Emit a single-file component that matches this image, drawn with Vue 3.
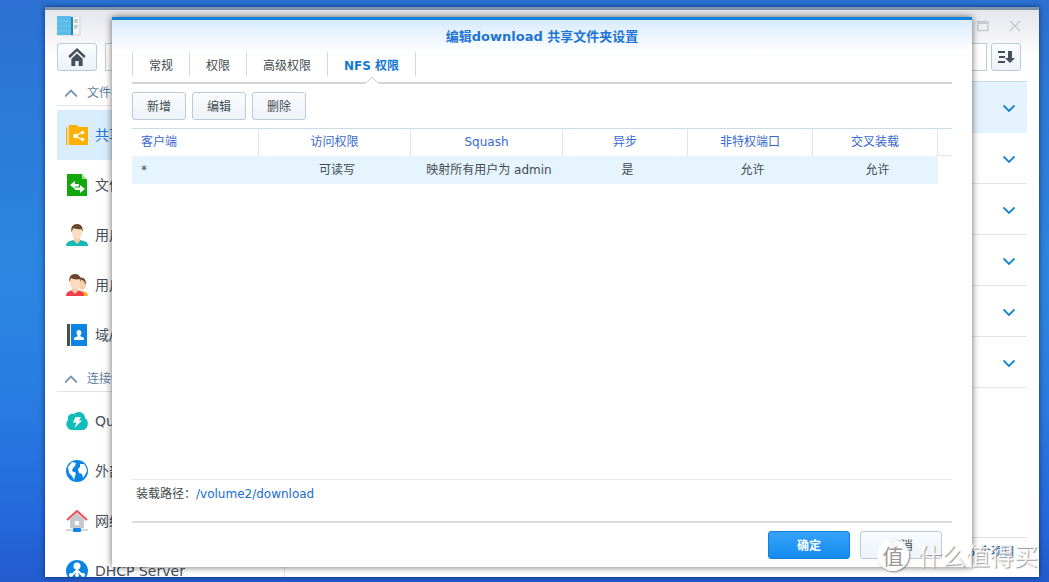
<script setup>
const shares = [
  { name: 'download', open: true },
  { name: 'homes' },
  { name: 'music' },
  { name: 'photo' },
  { name: 'video' },
  { name: 'web' },
]
const fileItems = [
  { icon: 'share', label: '共享文件夹', active: true },
  { icon: 'file', label: '文件服务' },
  { icon: 'user', label: '用户账号' },
  { icon: 'group', label: '用户群组' },
  { icon: 'domain', label: '域/LDAP' },
]
const linkItems = [
  { icon: 'cloud', label: 'QuickConnect' },
  { icon: 'globe', label: '外部访问' },
  { icon: 'network', label: '网络' },
  { icon: 'dhcp', label: 'DHCP Server' },
]
const groups = [
  { title: '文件共享', items: fileItems },
  { title: '连接性', items: linkItems },
]
const tabs = ['常规', '权限', '高级权限', 'NFS 权限']
const actions = ['新增', '编辑', '删除']
const heads = ['客户端', '访问权限', 'Squash', '异步', '非特权端口', '交叉装载']
const row = ['*', '可读写', '映射所有用户为 admin', '是', '允许', '允许']
</script>

<template>
  <div class="desktop">
    <section class="window">
      <header class="titlebar">
        <svg class="app-icon" viewBox="0 0 24 20">
          <rect width="24" height="20" fill="#dfe3e8" />
          <rect width="14" height="19" fill="#59bce8" />
          <path d="M0 5h14M0 10h14M0 15h14" stroke="#6cc6ee" />
          <rect x="14" y="1" width="2" height="18" fill="#2f7fae" />
          <rect x="16" y="1" width="6" height="17" fill="#f4f6f7" />
          <path d="M17 4h4M17 10h4" stroke="#5aa9d4" />
          <path d="M17 6h4M17 12h3" stroke="#b3b24d" />
        </svg>
        <div class="win-buttons">
          <button type="button" aria-label="最大化">
            <svg viewBox="0 0 12 12"><path d="M1 1.500h10v9H1z" fill="none" stroke="#c9cacd" stroke-width="1.500" /><path d="M1 3h10" stroke="#c9cacd" stroke-width="2" /></svg>
          </button>
          <button type="button" aria-label="关闭">
            <svg viewBox="0 0 12 12"><path d="M1 1l10 10M11 1L1 11" stroke="#c9cacd" stroke-width="1.500" /></svg>
          </button>
        </div>
      </header>

      <div class="toolbar">
        <button type="button" class="btn home" aria-label="主页">
          <svg viewBox="0 0 16 16">
            <path d="M1 8l7-6.500L15 8" fill="none" stroke="#464f5a" stroke-width="2.200" />
            <path d="M3 9.500l5-4.600 5 4.600V16H9.500v-4.500h-3V16H3z" fill="#464f5a" />
          </svg>
        </button>
        <input class="search" type="text" aria-label="搜索" />
        <input class="filter" type="text" aria-label="筛选" />
        <button type="button" class="btn sort" aria-label="排序">
          <svg viewBox="0 0 18 14">
            <path d="M1 2h7M2 7h6M1 12h7" stroke="#464f5a" stroke-width="2" />
            <path d="M11 1h4v7h3l-5 5-5-5h3z" fill="#464f5a" />
          </svg>
        </button>
      </div>

      <div class="body">
        <nav class="sidebar">
          <template v-for="g in groups" :key="g.title">
            <button type="button" class="group">
              <svg viewBox="0 0 12 8"><path d="M0 7.500l6-6 6 6" fill="none" stroke="#7591ac" stroke-width="1.800" /></svg>
              {{ g.title }}
            </button>
            <a v-for="it in g.items" :key="it.label" href="#" class="item" :class="{ active: it.active }">
              <svg viewBox="0 0 22 22">
                <g v-if="it.icon === 'share'">
                  <path d="M.7 3.500v17.500" fill="none" stroke="#ffb000" stroke-width="1.400" />
                  <path d="M2.800 1h8l2 2H22v18H2.800z" fill="#ffb000" />
                  <path d="M16.500 8.500L9 12l7.500 3.500" fill="none" stroke="#fff" stroke-width="1.300" />
                  <circle cx="9.500" cy="12" r="2.300" fill="#fff" /><circle cx="16.500" cy="8.500" r="1.700" fill="#fff" /><circle cx="16.500" cy="15.500" r="1.700" fill="#fff" />
                </g>
                <g v-else-if="it.icon === 'file'">
                  <path d="M1 0h14.500L21 5.500V22H1z" fill="#13a80b" /><path d="M16 .5v4.500h4.500" fill="#a9dfa3" />
                  <path d="M4 11l5-4v3h4v2.400H9V15z" fill="#fff" /><path d="M19 15l-5-4v2.600H9V16h5v3z" fill="#fff" />
                </g>
                <g v-else-if="it.icon === 'user'">
                  <path d="M0 22c0-4 3-5 8-6h6c5 1 8 2 8 6z" fill="#14b8b5" />
                  <path d="M8 12h6v5l-3 3-3-3z" fill="#efc8a5" />
                  <ellipse cx="11" cy="8.500" rx="5" ry="7" fill="#fbdcbf" />
                  <path d="M5.500 8C4.500 3 7 0 11 0s6.500 3 5.500 8L15.500 5c-3 .5-6 0-8-1z" fill="#69452b" />
                </g>
                <g v-else-if="it.icon === 'group'">
                  <path d="M14 22h8c0-3-2-4-5-5z" fill="#f7b023" />
                  <ellipse cx="16" cy="10" rx="4" ry="6" fill="#f7cfab" />
                  <path d="M12 4c5-2 9 1 7.500 7L18 7z" fill="#69452b" />
                  <path d="M0 22c0-4 3-5 7-6h4c5 1 7 2 7 6z" fill="#ee3e4b" />
                  <path d="M6 12h6v5l-3 3-3-3z" fill="#efc8a5" />
                  <ellipse cx="9" cy="8.500" rx="5" ry="7" fill="#fbdcbf" />
                  <path d="M3.500 8C2.500 3 5 0 9 0s6.500 3 5.500 8L13.500 5C10 6 7 5 5 4z" fill="#69452b" />
                </g>
                <g v-else-if="it.icon === 'domain'">
                  <path d="M1 0h3v22H1z" fill="#454f5c" /><path d="M5 0h16v22H5z" fill="#0b84e4" />
                  <path d="M8 16v-2c1-1 3-1 4-2-2-2-2-6 1-6s3 4 1 6c1 1 3 1 4 2v2z" fill="#fff" />
                </g>
                <g v-else-if="it.icon === 'cloud'">
                  <path d="M5.500 20a6 6 0 0 1-3.500-10C1 5 5 3 8 4c4-4 11-2 11 4 4 2 4 10-1.500 12z" fill="#10bdb9" />
                  <path d="M9.500 7H15l-2 3.500h3L8.500 18l2-5.500H7z" fill="#fff" />
                </g>
                <g v-else-if="it.icon === 'globe'">
                  <circle cx="11" cy="11" r="11" fill="#0b84e4" />
                  <path d="M2 7l4-5 4 1-1 3-2 2-1 3 4 2-1 3-1 4-2-4-3-3zM14 4l4 0 2 3 1 4-2 4-2 3-1-4-3-1-1-4 2-2z" fill="#fff" />
                </g>
                <g v-else-if="it.icon === 'network'">
                  <path d="M4 9l7-6 7 6v9H4z" fill="#c4c9cf" /><path d="M1 10l10-9 10 9" fill="none" stroke="#ee4d58" stroke-width="2" />
                  <rect x="9" y="11" width="4" height="4" fill="#fff" /><path d="M0 20h22" stroke="#a7aeb6" stroke-width="1" /><rect x="7" y="18" width="8" height="4" rx="1" fill="#0b84e4" />
                </g>
                <g v-else>
                  <circle cx="11" cy="11" r="11" fill="#0b84e4" />
                  <circle cx="11" cy="6" r="3.500" fill="#fff" /><path d="M11 9v6M11 10l-5 5M11 10l5 5" stroke="#fff" stroke-width="2" />
                  <circle cx="5" cy="15" r="2" fill="#fff" /><circle cx="11" cy="15" r="2" fill="#fff" /><circle cx="17" cy="15" r="2" fill="#fff" />
                </g>
              </svg>
              <span>{{ it.label }}</span>
            </a>
          </template>
        </nav>
        <main class="content">
          <ul class="shares">
            <li v-for="s in shares" :key="s.name" :class="{ open: s.open }">
              <span>{{ s.name }}</span>
              <button type="button" :aria-label="s.name">
                <svg viewBox="0 0 12 8"><path d="M.5 1.500L6 7l5.500-5.500" fill="none" stroke="#1483d2" stroke-width="1.800" /></svg>
              </button>
            </li>
          </ul>
          <footer class="count"><span>6 个项目</span></footer>
        </main>
      </div>
    </section>

    <section class="dialog" role="dialog" aria-labelledby="dialog-title">
      <h1 id="dialog-title">编辑download 共享文件夹设置</h1>
      <div class="tabs" role="tablist">
        <button v-for="(t, i) in tabs" :key="t" type="button" role="tab" :class="{ active: i === 3 }" :aria-selected="i === 3">
          {{ t }}
          <svg v-if="i === 3" class="notch" viewBox="0 0 16 8"><path d="M0 7h2l6-6 6 6h2v1H0z" fill="#fff" /><path d="M0 7h2l6-6 6 6h2" fill="none" stroke="#c9ccd0" /></svg>
        </button>
      </div>
      <div class="actions">
        <button v-for="a in actions" :key="a" type="button" class="btn">{{ a }}</button>
      </div>
      <div class="grid">
        <table>
          <colgroup>
            <col class="c1" /><col class="c2" /><col class="c2" /><col class="c3" /><col class="c3" /><col class="c3" /><col class="c4" />
          </colgroup>
          <thead>
            <tr><th v-for="h in heads" :key="h" scope="col">{{ h }}</th><td></td></tr>
          </thead>
          <tbody>
            <tr><td v-for="(c, i) in row" :key="i">{{ c }}</td><td></td></tr>
          </tbody>
        </table>
      </div>
      <p class="path">装载路径：<a href="#">/volume2/download</a></p>
      <footer class="buttons">
        <button type="button" class="btn primary">确定</button>
        <button type="button" class="btn">取消</button>
      </footer>
    </section>

    <div class="watermark"><span class="seal">值</span><span>什么值得买</span></div>
  </div>
</template>

<style>
body {
  margin: 0;
}
</style>

<style scoped>
* {
  box-sizing: border-box;
}
.desktop {
  position: relative;
  height: 100vh;
  overflow: hidden;
  padding: 7px 10px 5px 45px;
  background: linear-gradient(#2b70d2, #2c86e0 45%, #2a7fe2 65%, #2468dc 90%, #225bcb);
  color: #424c4f;
  font: 12px/20px "DejaVu Sans", "Noto Sans CJK SC", sans-serif;
}
button,
input {
  font: inherit;
  color: inherit;
  margin: 0;
}
button {
  padding: 0;
  border: 0;
  background: none;
}
svg {
  display: block;
}
a {
  text-decoration: none;
  color: #176dd0;
}
.btn {
  height: 28px;
  padding-top: 2px;
  border: 1px solid #bccad8;
  border-radius: 3px;
  background: linear-gradient(#fafcfe, #edf3fa);
}
.window {
  display: flex;
  flex-direction: column;
  height: 100%;
  overflow: hidden;
  border-top: 3px solid #7c93ac;
  background: linear-gradient(#e5e6ec, #fff 48px);
  box-shadow: 0 0 5px rgba(0, 20, 70, 0.7);
}
.titlebar {
  display: flex;
  flex: none;
  justify-content: space-between;
  height: 33px;
  padding: 6px 18px 0 12px;
}
.app-icon {
  width: 24px;
  height: 20px;
}
.win-buttons {
  display: flex;
  gap: 20px;
  height: 20px;
  align-items: center;
}
.win-buttons svg {
  width: 12px;
  height: 12px;
}
.toolbar {
  display: flex;
  flex: none;
  padding: 0 18px 0 12px;
}
.home {
  width: 40px;
  margin-right: 8px;
}
.toolbar .btn {
  padding-top: 0;
}
.home svg {
  width: 18px;
  height: 18px;
  margin: 0 auto;
}
.toolbar input {
  height: 28px;
  border: 1px solid #c3cad1;
  background: #fff;
}
.search {
  width: 168px;
  margin-right: 24px;
}
.filter {
  flex: 1;
  min-width: 0;
  margin-right: 4px;
}
.sort {
  width: 30px;
}
.sort svg {
  width: 18px;
  height: 14px;
  margin: 0 auto;
}
.body {
  display: flex;
  flex: 1;
  min-height: 0;
}
.sidebar {
  display: flex;
  flex-direction: column;
  width: 240px;
  padding: 3px 12px 0;
  border-right: 1px solid #dfe3e6;
}
.group {
  display: flex;
  flex: none;
  align-items: center;
  gap: 10px;
  height: 32px;
  margin-bottom: 4px;
  padding: 6px 0 0 8px;
  border-bottom: 1px solid #dfe5ea;
  color: #5e7f9e;
}
.group svg {
  width: 12px;
  height: 8px;
}
.item {
  display: flex;
  flex: none;
  align-items: center;
  gap: 7px;
  height: 50px;
  padding-left: 9px;
  color: #464f5a;
  font-size: 14px;
}
.item svg {
  width: 22px;
  height: 22px;
}
.item.active {
  background: #d9edfd;
  color: #2272d8;
}
.content {
  display: flex;
  flex: 1;
  flex-direction: column;
  justify-content: space-between;
  min-width: 0;
  padding: 10px 12px 9px 16px;
}
.shares {
  margin: 0;
  padding: 0;
  border-top: 1px solid #cddfea;
  list-style: none;
}
.shares li {
  display: flex;
  align-items: center;
  justify-content: space-between;
  height: 51px;
  padding: 2px 12px 0;
  border-bottom: 1px solid #e2e5e9;
}
.shares .open {
  border-color: #e4f3fe;
  background: #e4f3fe;
}
.shares svg {
  width: 12px;
  height: 8px;
}
.count {
  padding: 4px 12px 6px 0;
  border-top: 1px solid #dfe3e6;
  color: #075ba8;
  text-align: right;
}
.dialog {
  position: absolute;
  inset: 17px 77px 15px 112px;
  display: flex;
  flex-direction: column;
  padding: 0 20px;
  border-top: 3px solid #0f82da;
  background: linear-gradient(#d8ebfd, #fff 32px);
  box-shadow: 0 0 7px rgba(0, 0, 0, 0.6);
}
h1 {
  margin: 7px 0 5px;
  color: #1d74d4;
  font-size: 13px;
  line-height: 20px;
  font-weight: bold;
  text-align: center;
}
.tabs {
  display: flex;
  flex: none;
  height: 32px;
  padding-bottom: 6px;
  border-bottom: 2px solid #d2d4d6;
}
.tabs button {
  position: relative;
  padding: 3px 16px 0;
  border-right: 1px solid #d3d8dd;
}
.tabs button:first-child {
  border-left: 1px solid #d3d8dd;
}
.tabs .active {
  color: #1278d6;
  font-weight: bold;
}
.notch {
  position: absolute;
  left: 50%;
  bottom: -8px;
  width: 16px;
  height: 8px;
  margin-left: -8px;
}
.actions {
  display: flex;
  gap: 6px;
  padding: 8px 0;
}
.actions .btn {
  width: 54px;
}
.grid {
  flex: 1;
  min-height: 0;
  border-bottom: 1px solid #e6e8ea;
}
table {
  width: 100%;
  table-layout: fixed;
  border-collapse: separate;
  border-spacing: 0;
}
.c2 {
  width: 152px;
}
.c3 {
  width: 125px;
}
.c1 {
  width: 127px;
}
.c4 {
  width: 14px;
}
th,
td {
  height: 28px;
  padding: 0 4px;
  text-align: center;
  white-space: nowrap;
}
th {
  padding-bottom: 1px;
  border-right: 1px solid #dce6ee;
  color: #3869cf;
  font-weight: normal;
}
thead th,
thead td {
  border-top: 1px solid #ccdbe6;
}
thead td {
  border-bottom: 1px solid #e2e6ea;
}
tbody td {
  background: #e6f4fe;
}
tbody td:last-child {
  background: #fff;
}
tr > :first-child {
  padding-left: 9px;
  text-align: left;
}
tbody td:not(:first-child) {
  padding-left: 8px;
}
.path {
  margin: 0;
  padding: 4px 4px 17px;
}
.buttons {
  display: flex;
  justify-content: flex-end;
  gap: 10px;
  padding: 8px 10px;
  border-top: 2px solid #dcdddd;
}
.buttons .btn {
  width: 82px;
}
.buttons .primary {
  border-color: #1281da;
  background: linear-gradient(#35a2fa, #148cee);
  color: #fff;
  font-weight: bold;
}
.watermark {
  position: absolute;
  right: 11px;
  bottom: 10px;
  display: flex;
  align-items: center;
  gap: 9px;
  color: rgba(255, 255, 255, 0.9);
  font-family: "Noto Sans CJK SC", sans-serif;
  font-size: 24px;
  line-height: 34px;
  text-shadow: 1px 1px 1px #999;
  pointer-events: none;
}
.seal {
  width: 32px;
  height: 32px;
  border-radius: 50%;
  background: rgba(255, 255, 255, 0.9);
  box-shadow: 1px 1px 2px #888;
  color: #999;
  font-size: 21px;
  line-height: 32px;
  text-align: center;
  text-shadow: none;
}
</style>
